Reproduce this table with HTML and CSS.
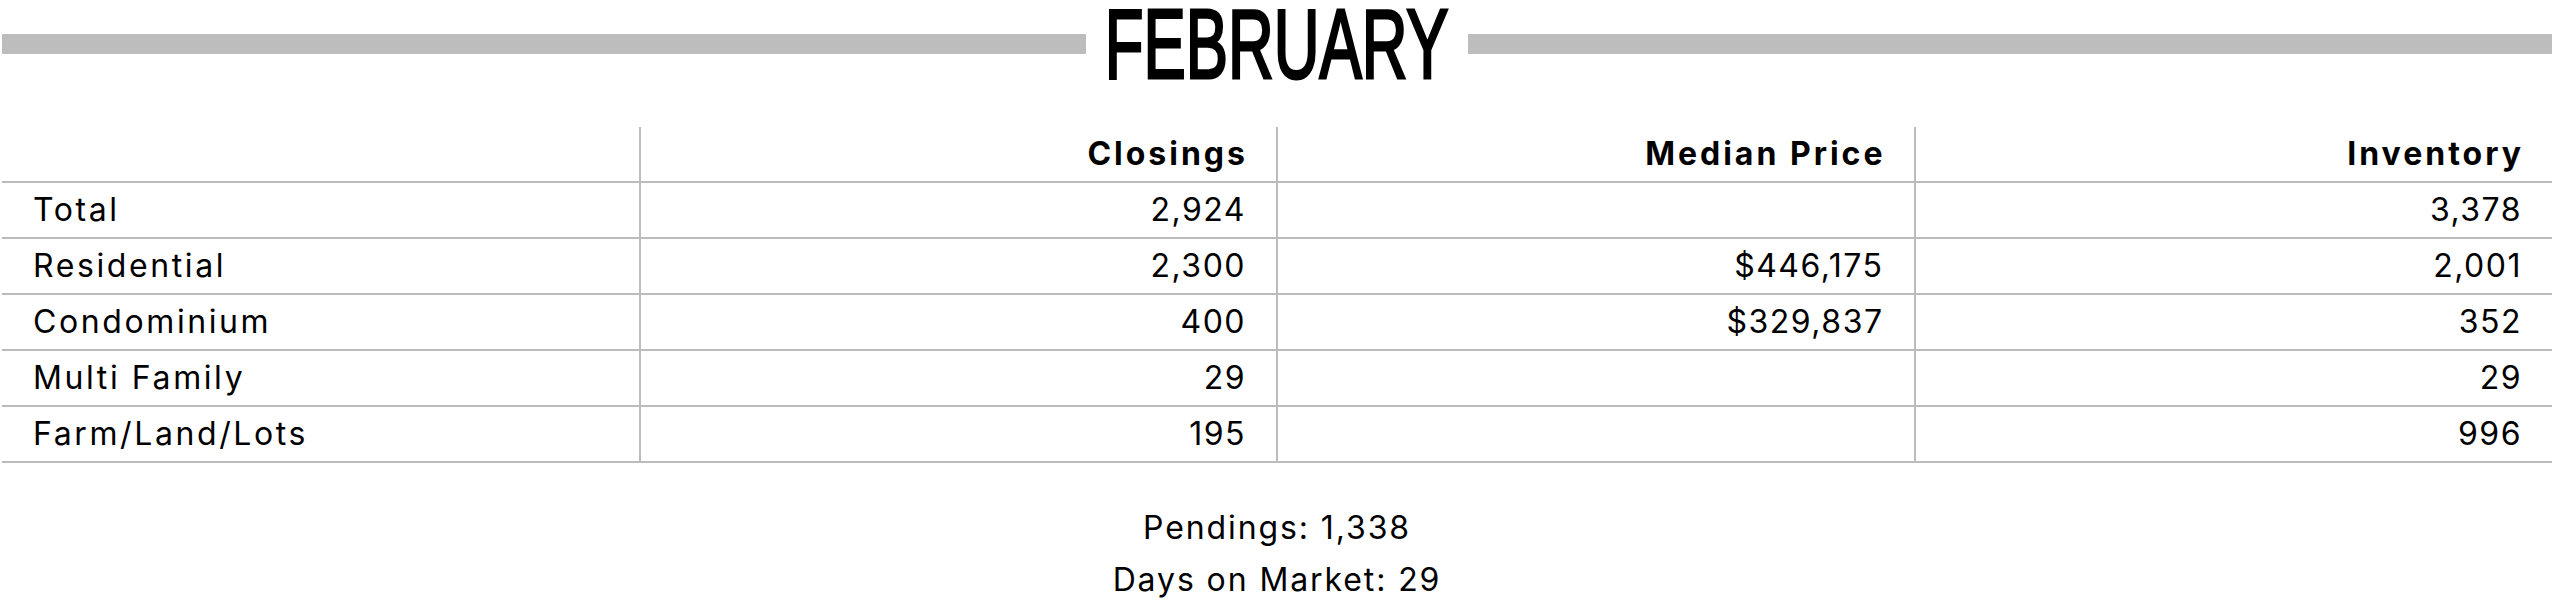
FILE: index.html
```html
<!DOCTYPE html>
<html>
<head>
<meta charset="utf-8">
<link rel="stylesheet" href="styles.css">
</head>
<body>
<div class="page">
  <div class="title-row">
    <div class="bar"></div>
    <div class="title"><span>FEBRUARY</span></div>
    <div class="bar"></div>
  </div>
  <table class="stats">
    <thead>
      <tr>
        <th class="label"></th>
        <th>Closings</th>
        <th>Median Price</th>
        <th>Inventory</th>
      </tr>
    </thead>
    <tbody>
      <tr><td class="label">Total</td><td>2,924</td><td></td><td>3,378</td></tr>
      <tr><td class="label">Residential</td><td>2,300</td><td>$446,175</td><td>2,001</td></tr>
      <tr><td class="label">Condominium</td><td>400</td><td>$329,837</td><td>352</td></tr>
      <tr><td class="label">Multi Family</td><td>29</td><td></td><td>29</td></tr>
      <tr><td class="label">Farm/Land/Lots</td><td>195</td><td></td><td>996</td></tr>
    </tbody>
  </table>
  <div class="summary">
    <div>Pendings: 1,338</div>
    <div>Days on Market: 29</div>
  </div>
</div>
</body>
</html>
```

FILE: styles.css
```css
html, body {
  margin: 0;
  padding: 0;
  background: #ffffff;
}

body {
  font-family: Inter, "Noto Sans", sans-serif;
  color: #000000;
}

.page {
  width: 2550px;
  margin-left: 2px;
}

.title-row {
  display: flex;
  align-items: center;
  height: 88px;
}

.bar {
  flex: 1;
  height: 20px;
  background: #bcbdbc;
}

.title {
  flex: none;
  margin: -13px -78px;
  font-family: "Liberation Sans", Arial, sans-serif;
  font-weight: 400;
  font-size: 99px;
  line-height: 114px;
  -webkit-text-stroke: 3px #000000;
}

.title span {
  display: block;
  white-space: nowrap;
  transform: scaleX(0.64);
}

.stats {
  margin-top: 39px;
  width: 2550px;
  table-layout: fixed;
  border-collapse: collapse;
  font-size: 32px;
}

.stats th,
.stats td {
  height: 54px;
  padding: 0 30px 0 31px;
  line-height: 54px;
  text-align: right;
  letter-spacing: 1.5px;
  border-bottom: 2px solid #bcbcbc;
  border-left: 2px solid #bcbcbc;
  white-space: nowrap;
}

.stats th {
  font-weight: 700;
  letter-spacing: 3px;
  padding-right: 28px;
}

.stats .label {
  text-align: left;
  border-left: none;
  font-weight: 400;
  letter-spacing: 2.6px;
}

.summary {
  margin-top: 39px;
  text-align: center;
  font-size: 32px;
  line-height: 52px;
  letter-spacing: 1.9px;
}
```
